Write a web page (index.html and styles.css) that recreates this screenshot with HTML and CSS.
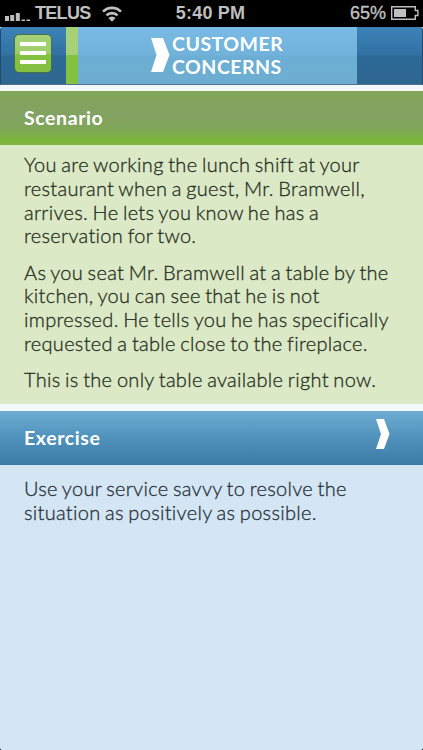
FILE: index.html
```
<!DOCTYPE html>
<html lang="en">
<head>
  <meta charset="UTF-8">
  <meta name="viewport" content="width=device-width, initial-scale=1.0">
  <title>Customer Concerns</title>
  <link rel="stylesheet" href="styles.css">
</head>
<body>
  <div class="screen">
    <div class="status-bar">
      <div class="status-left">
        <svg class="signal" width="26" height="10" viewBox="0 0 26 10">
          <path d="M0 4h4v5H0zM5.2 3h4v6h-4zM10.8 1h4v8h-4zM16.5 7.5h3.5V9h-3.5zM21.5 7.5H25V9h-3.5z"/>
        </svg>
        <span class="carrier">TELUS</span>
        <svg class="wifi" width="20" height="16" viewBox="0 0 20 16">
          <path d="M1 5.7a12.5 12.5 0 0 1 18 0M4.4 9.4a8 8 0 0 1 11.2 0" />
          <path class="dot" d="M6.4 12a5 5 0 0 1 7.2 0L10 15.8z" />
        </svg>
      </div>
      <span class="clock">5:40 PM</span>
      <div class="status-right">
        <span class="percent">65%</span>
        <svg class="battery" width="28" height="14" viewBox="0 0 28 14">
          <path class="shell" d="M.7.7h23.6v3.8h2.6v5h-2.6v3.8H.7z"/>
          <path class="charge" d="M3 3h12v8H3z"/>
        </svg>
      </div>
    </div>

    <header class="nav-bar">
      <div class="nav-left">
        <button class="menu-btn" type="button" aria-label="Menu">
          <span></span>
          <span></span>
          <span></span>
        </button>
      </div>
      <div class="nav-stripe"></div>
      <div class="nav-title">
        <svg class="title-arrow" width="19" height="34" viewBox="0 0 19 34">
          <path d="M0 0h12l6.5 17L12 34H0l5.5-17z"/>
        </svg>
        <h1>CUSTOMER<br>CONCERNS</h1>
      </div>
      <div class="nav-right"></div>
    </header>

    <section class="scenario">
      <h2>Scenario</h2>
      <div class="content">
        <p>You are working the lunch shift at your<br>restaurant when a guest, Mr. Bramwell,<br>arrives. He lets you know he has a<br>reservation for two.</p>
        <p>As you seat Mr. Bramwell at a table by the<br>kitchen, you can see that he is not<br>impressed. He tells you he has specifically<br>requested a table close to the fireplace.</p>
        <p>This is the only table available right now.</p>
      </div>
    </section>

    <section class="exercise">
      <h2>
        Exercise
        <svg class="next-arrow" width="14" height="30" viewBox="0 0 14 30">
          <path d="M0 0h8l5.5 15L8 30H0l5-15z"/>
        </svg>
      </h2>
      <div class="content">
        <p>Use your service savvy to resolve the<br>situation as positively as possible.</p>
      </div>
    </section>
  </div>
</body>
</html>
```
FILE: styles.css
```
* {
  box-sizing: border-box;
}
body {
  margin: 0;
  background-color: #000;
  font-family: Lato, sans-serif;
}
.screen {
  display: flex;
  flex-direction: column;
  width: 423px;
  height: 750px;
  overflow: hidden;
  background-color: #f2f8fc;
  border-radius: 0 0 3px 3px;
}

/* Status bar */
.status-bar {
  display: grid;
  grid-template-columns: 1fr auto 1fr;
  align-items: center;
  height: 27px;
  padding: 0 4px 0 5px;
  background-color: #000;
  color: #bfbfbf;
  font-family: "Liberation Sans", Arial, sans-serif;
  font-size: 18px;
  font-weight: bold;
  line-height: 27px;
}
.status-left, .status-right {
  display: flex;
  align-items: center;
}
.status-right {
  justify-content: flex-end;
}
.signal {
  fill: #bfbfbf;
  margin: 6px 4px 0 0;
}
.carrier {
  letter-spacing: -0.7px;
}
.clock {
  margin-right: 3px;
  letter-spacing: 0.2px;
}
.wifi {
  margin-left: 11px;
  fill: none;
  stroke: #bfbfbf;
  stroke-width: 2.6;
}
.wifi .dot {
  fill: #bfbfbf;
  stroke: none;
}
.percent {
  margin-right: 5px;
  font-weight: normal;
  -webkit-text-stroke: 0.4px #bfbfbf;
}
.battery {
  margin-bottom: 2px;
}
.battery .shell {
  fill: none;
  stroke: #bfbfbf;
  stroke-width: 1.4;
}
.battery .charge {
  fill: #bfbfbf;
}

/* Navigation bar */
.nav-bar {
  display: flex;
  height: 58px;
  border-bottom: 1px solid #526f8c;
  border-left: 1px solid #234a70;
  border-right: 1px solid #234a70;
  border-radius: 3px 3px 0 0;
  background: linear-gradient(#3c82b8, #3272a3 49%, #2c6996 51%, #2e6791);
}
.nav-left {
  width: 65px;
  padding: 7px 0 0 13px;
}
.menu-btn {
  display: flex;
  flex-direction: column;
  align-items: center;
  gap: 5px;
  width: 38px;
  height: 39px;
  padding: 7px 0 0;
  border: 1px solid #47704b;
  border-radius: 5px;
  background: linear-gradient(#a5d077, #9fce6b 50%, #85c140 51%, #83c041);
}
.menu-btn span {
  width: 26px;
  height: 4px;
  background-color: #fff;
}
.nav-stripe {
  width: 12px;
  background: linear-gradient(#a6d179 50%, #83c140 50%);
}
.nav-title {
  display: flex;
  align-items: flex-start;
  width: 279px;
  padding: 11px 0 0 73px;
  background: linear-gradient(#79bbe4, #70b2da 49%, #6caed4 51%, #6dadd1);
}
.title-arrow, .next-arrow {
  fill: #fff;
}
.nav-title h1 {
  margin: -6px 0 0 2px;
  color: #fff;
  font-size: 19.5px;
  font-weight: bold;
  line-height: 23px;
  letter-spacing: 0.5px;
}

/* Sections */
h2 {
  display: flex;
  align-items: center;
  justify-content: space-between;
  height: 54px;
  margin: 0;
  padding: 0 33px 2px 24px;
  color: #fff;
  font-size: 19.5px;
  font-weight: bold;
  letter-spacing: 0.6px;
}
.scenario {
  height: 313px;
  margin-top: 6px;
  background-color: #dbe9c7;
}
.scenario h2 {
  background: linear-gradient(#82a65a, #83a263 45%, #7fa657 70%, #7cb73c 92%, #7db83c);
}
.exercise {
  flex: 1;
  margin-top: 7px;
  background-color: #d4e6f4;
}
.exercise h2 {
  background: linear-gradient(#6eaed3, #5294bd 45%, #397ba5);
}
.next-arrow {
  margin-bottom: 6px;
}
.content {
  padding: 8px 0 0 24px;
  color: #262e20;
  font-size: 20px;
  font-weight: 300;
  line-height: 23.8px;
  letter-spacing: 0.3px;
  word-spacing: -1.2px;
  white-space: nowrap;
  -webkit-text-stroke: 0.3px;
}
.content p {
  margin: 0 0 12.4px;
}
.exercise .content {
  padding-top: 12px;
  color: #27303a;
}
```
